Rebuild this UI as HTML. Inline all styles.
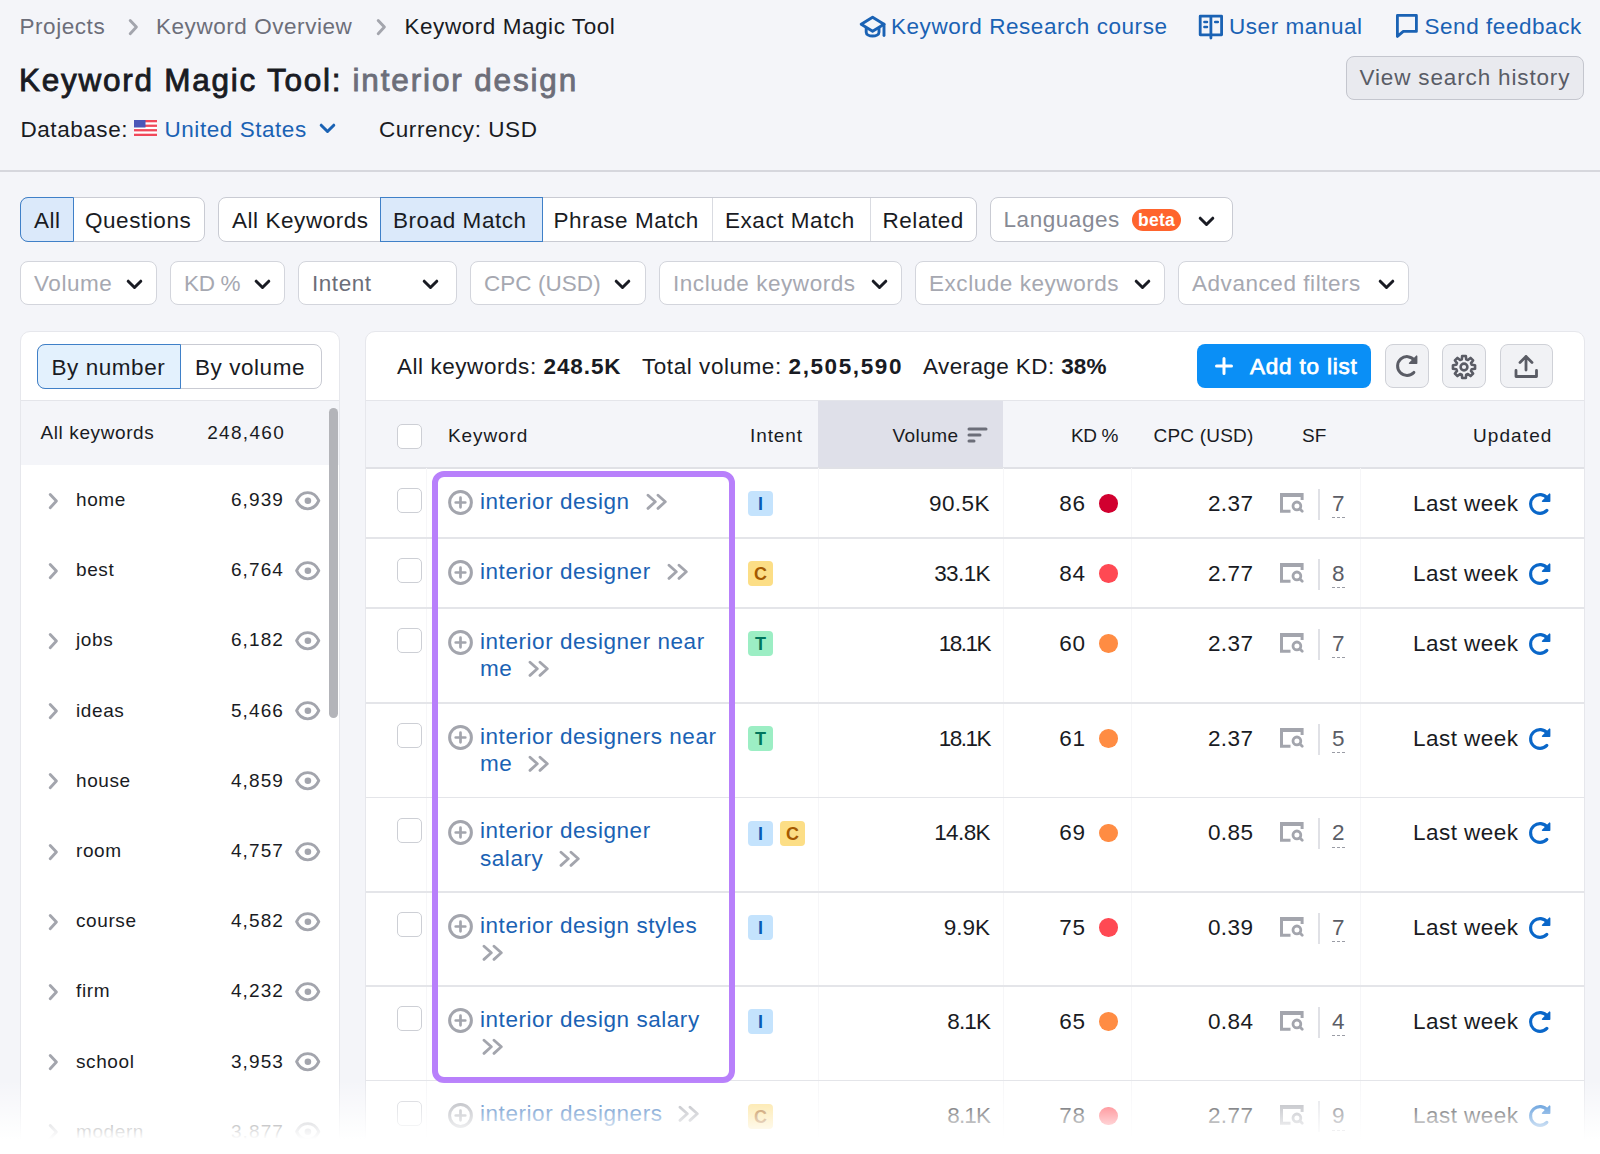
<!DOCTYPE html>
<html><head><meta charset="utf-8"><style>
*{box-sizing:border-box;margin:0;padding:0}
html,body{width:1600px;height:1154px;overflow:hidden;background:#f4f5f9;font-family:"Liberation Sans",sans-serif;color:#191b23}
.a{position:absolute;white-space:nowrap}
.t22{font-size:22.5px;letter-spacing:.55px;line-height:26px}
.t19{font-size:19px;letter-spacing:.6px;line-height:24px}
.gray{color:#6c6e79}
.blue{color:#1a62b4}
.ph{color:#a6a8b1}
.kw{font-size:22.5px;letter-spacing:.55px;line-height:26px;color:#1a62b4}
.num{font-size:22.5px;letter-spacing:.45px;line-height:26px}
.chev{position:absolute}
</style></head><body>
<div class="a t22 gray" style="left:19.5px;top:14px">Projects</div>
<svg class="a" style="left:127px;top:17.5px" width="12" height="18" viewBox="0 0 12 18"><path d="M3.2 2.5l6.2 6.6-6.2 6.6" fill="none" stroke="#a3a5ad" stroke-width="2.9" stroke-linecap="round" stroke-linejoin="round"/></svg>
<div class="a t22 gray" style="left:156px;top:14px">Keyword Overview</div>
<svg class="a" style="left:375px;top:17.5px" width="12" height="18" viewBox="0 0 12 18"><path d="M3.2 2.5l6.2 6.6-6.2 6.6" fill="none" stroke="#a3a5ad" stroke-width="2.9" stroke-linecap="round" stroke-linejoin="round"/></svg>
<div class="a t22" style="left:404.5px;top:14px">Keyword Magic Tool</div>
<div class="a" style="left:19px;top:60.5px;font-size:31.5px;font-weight:normal;-webkit-text-stroke:.85px #191b23;letter-spacing:1.75px;line-height:38px">Keyword Magic Tool:</div>
<div class="a" style="left:352.5px;top:60.5px;font-size:31.5px;font-weight:normal;-webkit-text-stroke:.85px #6c6e79;letter-spacing:1.85px;line-height:38px;color:#6c6e79">interior design</div>
<div class="a t22" style="left:20.5px;top:117px">Database:</div>
<svg class="a" style="left:134px;top:120px" width="23" height="16" viewBox="0 0 23 16">
<rect width="23" height="16" fill="#fff"/>
<rect y="0" width="23" height="2.3" fill="#f0485a"/><rect y="4.6" width="23" height="2.3" fill="#f0485a"/>
<rect y="9.1" width="23" height="2.3" fill="#f0485a"/><rect y="13.7" width="23" height="2.3" fill="#f0485a"/>
<rect width="11.5" height="7.5" fill="#4a56b8"/></svg>
<div class="a t22 blue" style="left:164.5px;top:117px">United States</div>
<svg class="a" style="left:319px;top:123px" width="17" height="11" viewBox="0 0 17 11"><path d="M2.2 2.2l6.3 6.3 6.3-6.3" fill="none" stroke="#1a62b4" stroke-width="3" stroke-linecap="round" stroke-linejoin="round"/></svg>
<div class="a t22" style="left:379px;top:117px">Currency: USD</div>
<div class="a" style="left:0;top:170px;width:1600px;height:2px;background:#d6d7dd"></div>
<svg class="a" style="left:859px;top:14px" width="28" height="26" viewBox="0 0 28 26">
 <path d="M13.6 3.3L2.2 10.2l11.4 7 11.4-7z" fill="none" stroke="#1a62b4" stroke-width="2.9" stroke-linejoin="round"/>
 <path d="M7.2 13.8v4.4c0 2.3 3 3.8 6.4 3.8s6.4-1.5 6.4-3.8v-4.4" fill="none" stroke="#1a62b4" stroke-width="2.9"/>
 <path d="M25 10.2v11.3" stroke="#1a62b4" stroke-width="2.9" stroke-linecap="round"/>
</svg>
<div class="a t22 blue" style="left:891px;top:14px">Keyword Research course</div>
<svg class="a" style="left:1198px;top:13px" width="26" height="27" viewBox="0 0 26 27">
 <path d="M2.2 3.2h21.4v18.6H2.2z" fill="none" stroke="#1a62b4" stroke-width="2.8" stroke-linejoin="round"/>
 <path d="M12.9 3.5v21.5" stroke="#1a62b4" stroke-width="2.8" stroke-linecap="round"/>
 <path d="M6.4 9h2.6M6.4 13.9h2.6M17.2 9h2.6" stroke="#1a62b4" stroke-width="2.5" stroke-linecap="round"/>
</svg>
<div class="a t22 blue" style="left:1229px;top:14px">User manual</div>
<svg class="a" style="left:1394px;top:14px" width="26" height="26" viewBox="0 0 26 26">
 <path d="M3.4 1.4H22.4V17.4H9.3L3.4 22.4Z" fill="none" stroke="#1a62b4" stroke-width="2.8" stroke-linejoin="round"/>
</svg>
<div class="a t22 blue" style="left:1424.5px;top:14px">Send feedback</div>
<div class="a" style="left:1346px;top:56px;width:238px;height:44px;border:1.5px solid #c4c6ce;border-radius:8px;background:#e9eaef"></div>
<div class="a t22" style="left:1359.5px;top:64.5px;color:#595c66;letter-spacing:.85px">View search history</div>
<div class="a" style="left:20px;top:197px;width:185px;height:45px;border:1.5px solid #c9cbd3;border-radius:8px;background:#fff"></div>
<div class="a" style="left:20px;top:197px;width:54px;height:45px;border:1.5px solid #3f80c8;border-radius:8px 0 0 8px;background:#dbe9fa"></div>
<div class="a t22" style="left:34px;top:207.5px">All</div>
<div class="a t22" style="left:85px;top:207.5px">Questions</div>
<div class="a" style="left:218px;top:197px;width:759px;height:45px;border:1.5px solid #c9cbd3;border-radius:8px;background:#fff"></div>
<div class="a" style="left:380px;top:197px;width:163px;height:45px;border:1.5px solid #3f80c8;border-radius:0;background:#dbe9fa"></div>
<div class="a" style="left:712px;top:198px;width:1px;height:43px;background:#d9dbe1"></div>
<div class="a" style="left:870px;top:198px;width:1px;height:43px;background:#d9dbe1"></div>
<div class="a t22" style="left:232px;top:207.5px">All Keywords</div>
<div class="a t22" style="left:393px;top:207.5px">Broad Match</div>
<div class="a t22" style="left:553.5px;top:207.5px">Phrase Match</div>
<div class="a t22" style="left:725px;top:207.5px">Exact Match</div>
<div class="a t22" style="left:882.5px;top:207.5px">Related</div>
<div class="a" style="left:990px;top:197px;width:243px;height:45px;border:1.5px solid #c9cbd3;border-radius:8px;background:#fff"></div>
<div class="a t22" style="left:1003.5px;top:206.5px;color:#878a94">Languages</div>
<div class="a" style="left:1132px;top:209px;width:49px;height:22px;border-radius:11px;background:#ff642d;color:#fff;font-size:17.5px;font-weight:bold;line-height:22px;text-align:center;letter-spacing:.3px">beta</div>
<svg class="a" style="left:1198px;top:215.5px" width="17" height="11" viewBox="0 0 17 11"><path d="M2.2 2.2l6.3 6.3 6.3-6.3" fill="none" stroke="#191b23" stroke-width="3" stroke-linecap="round" stroke-linejoin="round"/></svg>
<div class="a" style="left:20px;top:261px;width:137px;height:44px;border:1.5px solid #d3d5dc;border-radius:8px;background:#fff"></div>
<div class="a t22" style="left:34px;top:270.5px;color:#a6a8b1;letter-spacing:.55px">Volume</div>
<svg class="a" style="left:126px;top:279px" width="17" height="11" viewBox="0 0 17 11"><path d="M2.2 2.2l6.3 6.3 6.3-6.3" fill="none" stroke="#191b23" stroke-width="3" stroke-linecap="round" stroke-linejoin="round"/></svg>
<div class="a" style="left:170px;top:261px;width:115px;height:44px;border:1.5px solid #d3d5dc;border-radius:8px;background:#fff"></div>
<div class="a t22" style="left:184px;top:270.5px;color:#a6a8b1;letter-spacing:-.3px">KD %</div>
<svg class="a" style="left:254px;top:279px" width="17" height="11" viewBox="0 0 17 11"><path d="M2.2 2.2l6.3 6.3 6.3-6.3" fill="none" stroke="#191b23" stroke-width="3" stroke-linecap="round" stroke-linejoin="round"/></svg>
<div class="a" style="left:298px;top:261px;width:159px;height:44px;border:1.5px solid #d3d5dc;border-radius:8px;background:#fff"></div>
<div class="a t22" style="left:312px;top:270.5px;color:#6c6e79;letter-spacing:.55px">Intent</div>
<svg class="a" style="left:422px;top:279px" width="17" height="11" viewBox="0 0 17 11"><path d="M2.2 2.2l6.3 6.3 6.3-6.3" fill="none" stroke="#191b23" stroke-width="3" stroke-linecap="round" stroke-linejoin="round"/></svg>
<div class="a" style="left:470px;top:261px;width:176px;height:44px;border:1.5px solid #d3d5dc;border-radius:8px;background:#fff"></div>
<div class="a t22" style="left:484px;top:270.5px;color:#a6a8b1;letter-spacing:.05px">CPC (USD)</div>
<svg class="a" style="left:614px;top:279px" width="17" height="11" viewBox="0 0 17 11"><path d="M2.2 2.2l6.3 6.3 6.3-6.3" fill="none" stroke="#191b23" stroke-width="3" stroke-linecap="round" stroke-linejoin="round"/></svg>
<div class="a" style="left:659px;top:261px;width:243px;height:44px;border:1.5px solid #d3d5dc;border-radius:8px;background:#fff"></div>
<div class="a t22" style="left:673px;top:270.5px;color:#a6a8b1;letter-spacing:.55px">Include keywords</div>
<svg class="a" style="left:871px;top:279px" width="17" height="11" viewBox="0 0 17 11"><path d="M2.2 2.2l6.3 6.3 6.3-6.3" fill="none" stroke="#191b23" stroke-width="3" stroke-linecap="round" stroke-linejoin="round"/></svg>
<div class="a" style="left:915px;top:261px;width:250px;height:44px;border:1.5px solid #d3d5dc;border-radius:8px;background:#fff"></div>
<div class="a t22" style="left:929px;top:270.5px;color:#a6a8b1;letter-spacing:.55px">Exclude keywords</div>
<svg class="a" style="left:1134px;top:279px" width="17" height="11" viewBox="0 0 17 11"><path d="M2.2 2.2l6.3 6.3 6.3-6.3" fill="none" stroke="#191b23" stroke-width="3" stroke-linecap="round" stroke-linejoin="round"/></svg>
<div class="a" style="left:1178px;top:261px;width:231px;height:44px;border:1.5px solid #d3d5dc;border-radius:8px;background:#fff"></div>
<div class="a t22" style="left:1192px;top:270.5px;color:#a6a8b1;letter-spacing:.55px">Advanced filters</div>
<svg class="a" style="left:1378px;top:279px" width="17" height="11" viewBox="0 0 17 11"><path d="M2.2 2.2l6.3 6.3 6.3-6.3" fill="none" stroke="#191b23" stroke-width="3" stroke-linecap="round" stroke-linejoin="round"/></svg>
<div class="a" style="left:20px;top:331px;width:320px;height:900px;background:#fff;border:1px solid #e6e7ec;border-radius:10px"></div>
<div class="a" style="left:21px;top:400px;width:318px;height:1px;background:#e4e5ea"></div>
<div class="a" style="left:21px;top:401px;width:318px;height:64px;background:#f4f5f9"></div>
<div class="a" style="left:37px;top:344px;width:285px;height:45px;border:1.5px solid #c9cbd3;border-radius:8px;background:#fff"></div>
<div class="a" style="left:37px;top:344px;width:144px;height:45px;border:1.5px solid #3f80c8;border-radius:8px 0 0 8px;background:#e3f1fd"></div>
<div class="a t22" style="left:51.5px;top:355px">By number</div>
<div class="a t22" style="left:195px;top:355px">By volume</div>
<div class="a t19" style="left:40.5px;top:421px">All keywords</div>
<div class="a t19" style="left:183px;width:102px;text-align:right;top:421px;letter-spacing:1.3px">248,460</div>
<div class="a" style="left:329px;top:408px;width:9px;height:310px;border-radius:5px;background:#b3b4b9"></div>
<svg class="a" style="left:47px;top:491.5px" width="12" height="18" viewBox="0 0 12 18"><path d="M3.2 2.5l6.2 6.6-6.2 6.6" fill="none" stroke="#a3a5ad" stroke-width="2.9" stroke-linecap="round" stroke-linejoin="round"/></svg>
<div class="a t19" style="left:76px;top:488.0px">home</div>
<div class="a t19" style="left:183px;width:101px;text-align:right;top:488.0px;letter-spacing:1.1px">6,939</div>
<svg class="a" style="left:294.5px;top:490.6px" width="26" height="20" viewBox="0 0 26 20"><path d="M1.6 9.7C4 4.2 8 1.6 12.7 1.6S21.4 4.2 23.8 9.7C21.4 15.2 17.4 17.9 12.7 17.9S4 15.2 1.6 9.7z" fill="none" stroke="#a3a5ad" stroke-width="2.9" stroke-linejoin="round"/><circle cx="12.9" cy="9.8" r="3.3" fill="#a3a5ad"/></svg>
<svg class="a" style="left:47px;top:561.7px" width="12" height="18" viewBox="0 0 12 18"><path d="M3.2 2.5l6.2 6.6-6.2 6.6" fill="none" stroke="#a3a5ad" stroke-width="2.9" stroke-linecap="round" stroke-linejoin="round"/></svg>
<div class="a t19" style="left:76px;top:558.2px">best</div>
<div class="a t19" style="left:183px;width:101px;text-align:right;top:558.2px;letter-spacing:1.1px">6,764</div>
<svg class="a" style="left:294.5px;top:560.8px" width="26" height="20" viewBox="0 0 26 20"><path d="M1.6 9.7C4 4.2 8 1.6 12.7 1.6S21.4 4.2 23.8 9.7C21.4 15.2 17.4 17.9 12.7 17.9S4 15.2 1.6 9.7z" fill="none" stroke="#a3a5ad" stroke-width="2.9" stroke-linejoin="round"/><circle cx="12.9" cy="9.8" r="3.3" fill="#a3a5ad"/></svg>
<svg class="a" style="left:47px;top:631.9px" width="12" height="18" viewBox="0 0 12 18"><path d="M3.2 2.5l6.2 6.6-6.2 6.6" fill="none" stroke="#a3a5ad" stroke-width="2.9" stroke-linecap="round" stroke-linejoin="round"/></svg>
<div class="a t19" style="left:76px;top:628.4px">jobs</div>
<div class="a t19" style="left:183px;width:101px;text-align:right;top:628.4px;letter-spacing:1.1px">6,182</div>
<svg class="a" style="left:294.5px;top:631.0px" width="26" height="20" viewBox="0 0 26 20"><path d="M1.6 9.7C4 4.2 8 1.6 12.7 1.6S21.4 4.2 23.8 9.7C21.4 15.2 17.4 17.9 12.7 17.9S4 15.2 1.6 9.7z" fill="none" stroke="#a3a5ad" stroke-width="2.9" stroke-linejoin="round"/><circle cx="12.9" cy="9.8" r="3.3" fill="#a3a5ad"/></svg>
<svg class="a" style="left:47px;top:702.1px" width="12" height="18" viewBox="0 0 12 18"><path d="M3.2 2.5l6.2 6.6-6.2 6.6" fill="none" stroke="#a3a5ad" stroke-width="2.9" stroke-linecap="round" stroke-linejoin="round"/></svg>
<div class="a t19" style="left:76px;top:698.6px">ideas</div>
<div class="a t19" style="left:183px;width:101px;text-align:right;top:698.6px;letter-spacing:1.1px">5,466</div>
<svg class="a" style="left:294.5px;top:701.2px" width="26" height="20" viewBox="0 0 26 20"><path d="M1.6 9.7C4 4.2 8 1.6 12.7 1.6S21.4 4.2 23.8 9.7C21.4 15.2 17.4 17.9 12.7 17.9S4 15.2 1.6 9.7z" fill="none" stroke="#a3a5ad" stroke-width="2.9" stroke-linejoin="round"/><circle cx="12.9" cy="9.8" r="3.3" fill="#a3a5ad"/></svg>
<svg class="a" style="left:47px;top:772.3px" width="12" height="18" viewBox="0 0 12 18"><path d="M3.2 2.5l6.2 6.6-6.2 6.6" fill="none" stroke="#a3a5ad" stroke-width="2.9" stroke-linecap="round" stroke-linejoin="round"/></svg>
<div class="a t19" style="left:76px;top:768.8px">house</div>
<div class="a t19" style="left:183px;width:101px;text-align:right;top:768.8px;letter-spacing:1.1px">4,859</div>
<svg class="a" style="left:294.5px;top:771.4px" width="26" height="20" viewBox="0 0 26 20"><path d="M1.6 9.7C4 4.2 8 1.6 12.7 1.6S21.4 4.2 23.8 9.7C21.4 15.2 17.4 17.9 12.7 17.9S4 15.2 1.6 9.7z" fill="none" stroke="#a3a5ad" stroke-width="2.9" stroke-linejoin="round"/><circle cx="12.9" cy="9.8" r="3.3" fill="#a3a5ad"/></svg>
<svg class="a" style="left:47px;top:842.5px" width="12" height="18" viewBox="0 0 12 18"><path d="M3.2 2.5l6.2 6.6-6.2 6.6" fill="none" stroke="#a3a5ad" stroke-width="2.9" stroke-linecap="round" stroke-linejoin="round"/></svg>
<div class="a t19" style="left:76px;top:839.0px">room</div>
<div class="a t19" style="left:183px;width:101px;text-align:right;top:839.0px;letter-spacing:1.1px">4,757</div>
<svg class="a" style="left:294.5px;top:841.6px" width="26" height="20" viewBox="0 0 26 20"><path d="M1.6 9.7C4 4.2 8 1.6 12.7 1.6S21.4 4.2 23.8 9.7C21.4 15.2 17.4 17.9 12.7 17.9S4 15.2 1.6 9.7z" fill="none" stroke="#a3a5ad" stroke-width="2.9" stroke-linejoin="round"/><circle cx="12.9" cy="9.8" r="3.3" fill="#a3a5ad"/></svg>
<svg class="a" style="left:47px;top:912.7px" width="12" height="18" viewBox="0 0 12 18"><path d="M3.2 2.5l6.2 6.6-6.2 6.6" fill="none" stroke="#a3a5ad" stroke-width="2.9" stroke-linecap="round" stroke-linejoin="round"/></svg>
<div class="a t19" style="left:76px;top:909.2px">course</div>
<div class="a t19" style="left:183px;width:101px;text-align:right;top:909.2px;letter-spacing:1.1px">4,582</div>
<svg class="a" style="left:294.5px;top:911.8px" width="26" height="20" viewBox="0 0 26 20"><path d="M1.6 9.7C4 4.2 8 1.6 12.7 1.6S21.4 4.2 23.8 9.7C21.4 15.2 17.4 17.9 12.7 17.9S4 15.2 1.6 9.7z" fill="none" stroke="#a3a5ad" stroke-width="2.9" stroke-linejoin="round"/><circle cx="12.9" cy="9.8" r="3.3" fill="#a3a5ad"/></svg>
<svg class="a" style="left:47px;top:982.9px" width="12" height="18" viewBox="0 0 12 18"><path d="M3.2 2.5l6.2 6.6-6.2 6.6" fill="none" stroke="#a3a5ad" stroke-width="2.9" stroke-linecap="round" stroke-linejoin="round"/></svg>
<div class="a t19" style="left:76px;top:979.4px">firm</div>
<div class="a t19" style="left:183px;width:101px;text-align:right;top:979.4px;letter-spacing:1.1px">4,232</div>
<svg class="a" style="left:294.5px;top:982.0px" width="26" height="20" viewBox="0 0 26 20"><path d="M1.6 9.7C4 4.2 8 1.6 12.7 1.6S21.4 4.2 23.8 9.7C21.4 15.2 17.4 17.9 12.7 17.9S4 15.2 1.6 9.7z" fill="none" stroke="#a3a5ad" stroke-width="2.9" stroke-linejoin="round"/><circle cx="12.9" cy="9.8" r="3.3" fill="#a3a5ad"/></svg>
<svg class="a" style="left:47px;top:1053.1px" width="12" height="18" viewBox="0 0 12 18"><path d="M3.2 2.5l6.2 6.6-6.2 6.6" fill="none" stroke="#a3a5ad" stroke-width="2.9" stroke-linecap="round" stroke-linejoin="round"/></svg>
<div class="a t19" style="left:76px;top:1049.6px">school</div>
<div class="a t19" style="left:183px;width:101px;text-align:right;top:1049.6px;letter-spacing:1.1px">3,953</div>
<svg class="a" style="left:294.5px;top:1052.2px" width="26" height="20" viewBox="0 0 26 20"><path d="M1.6 9.7C4 4.2 8 1.6 12.7 1.6S21.4 4.2 23.8 9.7C21.4 15.2 17.4 17.9 12.7 17.9S4 15.2 1.6 9.7z" fill="none" stroke="#a3a5ad" stroke-width="2.9" stroke-linejoin="round"/><circle cx="12.9" cy="9.8" r="3.3" fill="#a3a5ad"/></svg>
<svg class="a" style="left:47px;top:1123.3px" width="12" height="18" viewBox="0 0 12 18"><path d="M3.2 2.5l6.2 6.6-6.2 6.6" fill="none" stroke="#a3a5ad" stroke-width="2.9" stroke-linecap="round" stroke-linejoin="round"/></svg>
<div class="a t19" style="left:76px;top:1119.8px">modern</div>
<div class="a t19" style="left:183px;width:101px;text-align:right;top:1119.8px;letter-spacing:1.1px">3,877</div>
<svg class="a" style="left:294.5px;top:1122.4px" width="26" height="20" viewBox="0 0 26 20"><path d="M1.6 9.7C4 4.2 8 1.6 12.7 1.6S21.4 4.2 23.8 9.7C21.4 15.2 17.4 17.9 12.7 17.9S4 15.2 1.6 9.7z" fill="none" stroke="#a3a5ad" stroke-width="2.9" stroke-linejoin="round"/><circle cx="12.9" cy="9.8" r="3.3" fill="#a3a5ad"/></svg>
<div class="a" style="left:365px;top:331px;width:1220px;height:900px;background:#fff;border:1px solid #e6e7ec;border-radius:10px"></div>
<div class="a t22" style="left:397px;top:354px">All keywords: <b style="letter-spacing:.9px">248.5K</b></div>
<div class="a t22" style="left:642px;top:354px">Total volume: <b style="letter-spacing:1.6px">2,505,590</b></div>
<div class="a t22" style="left:923px;top:354px;letter-spacing:.4px">Average KD: <b style="letter-spacing:.1px">38%</b></div>
<div class="a" style="left:1197px;top:344px;width:174px;height:44px;border-radius:8px;background:#0a8ff6"></div>
<svg class="a" style="left:1214px;top:356px" width="20" height="20" viewBox="0 0 20 20"><path d="M10 2.5v15M2.5 10h15" stroke="#fff" stroke-width="3" stroke-linecap="round"/></svg>
<div class="a" style="left:1250px;top:354px;font-size:22.5px;font-weight:normal;-webkit-text-stroke:.75px #fff;color:#fff;line-height:26px;letter-spacing:.8px">Add to list</div>
<div class="a" style="left:1385px;top:344px;width:44px;height:44px;border:1.5px solid #cfd1d7;border-radius:8px;background:#f1f2f5"></div>
<div class="a" style="left:1442px;top:344px;width:44px;height:44px;border:1.5px solid #cfd1d7;border-radius:8px;background:#f1f2f5"></div>
<div class="a" style="left:1500px;top:344px;width:53px;height:44px;border:1.5px solid #cfd1d7;border-radius:8px;background:#f1f2f5"></div>
<svg class="a" style="left:1394px;top:353px" width="26" height="26" viewBox="0 0 26 26"><path d="M20.41 7.21A9.4 9.4 0 1 0 19.87 19.41" fill="none" stroke="#5a5c65" stroke-width="3.0" stroke-linecap="round"/><path d="M22.6 3.2V10.2H15.6z" fill="#5a5c65" stroke="#5a5c65" stroke-width="1.6" stroke-linejoin="round"/></svg>
<svg class="a" style="left:1451px;top:353.5px" width="26" height="26" viewBox="0 0 26 26"><path d="M20.70 10.82 L24.05 11.18 L24.05 14.82 L20.70 15.18 L19.99 16.90 L22.10 19.53 L19.53 22.10 L16.90 19.99 L15.18 20.70 L14.82 24.05 L11.18 24.05 L10.82 20.70 L9.10 19.99 L6.47 22.10 L3.90 19.53 L6.01 16.90 L5.30 15.18 L1.95 14.82 L1.95 11.18 L5.30 10.82 L6.01 9.10 L3.90 6.47 L6.47 3.90 L9.10 6.01 L10.82 5.30 L11.18 1.95 L14.82 1.95 L15.18 5.30 L16.90 6.01 L19.53 3.90 L22.10 6.47 L19.99 9.10z" fill="none" stroke="#5a5c65" stroke-width="2.6" stroke-linejoin="round"/><circle cx="13" cy="13" r="3.4" fill="none" stroke="#5a5c65" stroke-width="2.6"/></svg>
<svg class="a" style="left:1513px;top:353px" width="26" height="26" viewBox="0 0 26 26"><path d="M13 17V3.5M7 9.5l6-6 6 6" fill="none" stroke="#5a5c65" stroke-width="2.8" stroke-linecap="round" stroke-linejoin="round"/><path d="M3 17.5v6h20.5v-6" fill="none" stroke="#5a5c65" stroke-width="2.8" stroke-linecap="round" stroke-linejoin="round"/></svg>
<div class="a" style="left:366px;top:400px;width:1218px;height:1px;background:#e4e5ea"></div>
<div class="a" style="left:366px;top:401px;width:1218px;height:67px;background:#f4f5f9"></div>
<div class="a" style="left:818px;top:401px;width:185px;height:67px;background:#dfe0e9"></div>
<div class="a" style="left:366px;top:466.5px;width:1218px;height:2px;background:#e0e1e6"></div>
<div class="a" style="left:397px;top:424px;width:25px;height:25px;border:1.5px solid #cdcfd5;border-radius:5px;background:#fff"></div>
<div class="a t19" style="left:448px;top:424px;letter-spacing:0.9px">Keyword</div>
<div class="a t19" style="left:750px;top:424px;letter-spacing:0.9px">Intent</div>
<div class="a t19" style="left:758.5px;width:200px;text-align:right;top:424px;letter-spacing:0.45px;margin-right:-0.45px">Volume</div>
<div class="a t19" style="left:918px;width:200px;text-align:right;top:424px;letter-spacing:-0.4px;margin-right:--0.4px">KD %</div>
<div class="a t19" style="left:1053.5px;width:200px;text-align:right;top:424px;letter-spacing:0.2px;margin-right:-0.2px">CPC (USD)</div>
<div class="a t19" style="left:1302px;top:424px;letter-spacing:0px">SF</div>
<div class="a t19" style="left:1352.5px;width:200px;text-align:right;top:424px;letter-spacing:1.1px;margin-right:-1.1px">Updated</div>
<svg class="a" style="left:967px;top:426px" width="21" height="18" viewBox="0 0 21 18"><path d="M2 3h17M2 9h11M2 15h5" stroke="#6c6e79" stroke-width="3" stroke-linecap="round"/></svg>
<div class="a" style="left:426px;top:468px;width:1px;height:700px;background:#f6f6f8"></div>
<div class="a" style="left:818px;top:468px;width:1px;height:700px;background:#f6f6f8"></div>
<div class="a" style="left:1003px;top:468px;width:1px;height:700px;background:#f6f6f8"></div>
<div class="a" style="left:1131px;top:468px;width:1px;height:700px;background:#f6f6f8"></div>
<div class="a" style="left:1360px;top:468px;width:1px;height:700px;background:#f6f6f8"></div>
<div class="a" style="left:366px;top:537.0px;width:1218px;height:1.5px;background:#e4e5e9"></div>
<div class="a" style="left:397px;top:488.0px;width:25px;height:25px;border:1.5px solid #cdcfd5;border-radius:5px;background:#fff"></div>
<svg class="a" style="left:447px;top:489.0px" width="27" height="27" viewBox="0 0 27 27"><circle cx="13.5" cy="13.5" r="10.9" fill="none" stroke="#a3a5ad" stroke-width="3"/><path d="M13.5 8.7v9.6M8.7 13.5h9.6" stroke="#a3a5ad" stroke-width="2.7" stroke-linecap="round"/></svg>
<div class="a kw" style="left:480px;top:488.5px">interior design<svg width="22" height="18" viewBox="0 0 22 18" style="vertical-align:-2px;margin-left:15px"><path d="M3 2.2l7.3 6.6L3 15.4M13 2.2l7.3 6.6L13 15.4" fill="none" stroke="#a3a5ad" stroke-width="2.8" stroke-linecap="round" stroke-linejoin="round"/></svg></div>
<div class="a" style="left:748px;top:491.0px;width:25px;height:25px;border-radius:4px;background:#c4e3fd;color:#0a5ab4;font-size:18px;font-weight:bold;line-height:27px;text-align:center">I</div>
<div class="a num" style="left:790px;width:200px;text-align:right;top:490.5px;letter-spacing:0.45px">90.5K</div>
<div class="a num" style="left:886px;width:200px;text-align:right;top:490.5px;letter-spacing:.9px">86</div>
<div class="a" style="left:1099.3px;top:494.1px;width:18.6px;height:18.6px;border-radius:50%;background:#d1002f"></div>
<div class="a num" style="left:1053.5px;width:200px;text-align:right;top:490.5px">2.37</div>
<svg class="a" style="left:1280px;top:492.5px" width="24" height="20" viewBox="0 0 24 20"><path d="M0 0h23.6v7H20.6V4H3v12.7h7.5v3H0z" fill="#a3a5ad"/><circle cx="16.9" cy="12.9" r="3.9" fill="none" stroke="#a3a5ad" stroke-width="2.8"/><path d="M19.8 15.8l2.4 2.4" stroke="#a3a5ad" stroke-width="2.8" stroke-linecap="round"/></svg>
<div class="a" style="left:1318px;top:488.5px;width:2px;height:31px;background:#e0e1e6"></div>
<div class="a num" style="left:1332px;top:490.5px;color:#5b5d66">7</div>
<div class="a" style="left:1332px;top:517.0px;width:13px;height:0;border-top:1.5px dashed #9a9ca5"></div>
<div class="a num" style="left:1413px;top:490.5px">Last week</div>
<svg class="a" style="left:1527px;top:490.5px" width="26" height="26" viewBox="0 0 26 26"><path d="M20.41 7.21A9.4 9.4 0 1 0 19.87 19.41" fill="none" stroke="#0a67c9" stroke-width="3.1" stroke-linecap="round"/><path d="M22.6 3.2V10.2H15.6z" fill="#0a67c9" stroke="#0a67c9" stroke-width="1.6" stroke-linejoin="round"/></svg>
<div class="a" style="left:366px;top:607.0px;width:1218px;height:1.5px;background:#e4e5e9"></div>
<div class="a" style="left:397px;top:558.0px;width:25px;height:25px;border:1.5px solid #cdcfd5;border-radius:5px;background:#fff"></div>
<svg class="a" style="left:447px;top:559.0px" width="27" height="27" viewBox="0 0 27 27"><circle cx="13.5" cy="13.5" r="10.9" fill="none" stroke="#a3a5ad" stroke-width="3"/><path d="M13.5 8.7v9.6M8.7 13.5h9.6" stroke="#a3a5ad" stroke-width="2.7" stroke-linecap="round"/></svg>
<div class="a kw" style="left:480px;top:558.5px">interior designer<svg width="22" height="18" viewBox="0 0 22 18" style="vertical-align:-2px;margin-left:15px"><path d="M3 2.2l7.3 6.6L3 15.4M13 2.2l7.3 6.6L13 15.4" fill="none" stroke="#a3a5ad" stroke-width="2.8" stroke-linecap="round" stroke-linejoin="round"/></svg></div>
<div class="a" style="left:748px;top:561.0px;width:25px;height:25px;border-radius:4px;background:#fcde86;color:#a55900;font-size:18px;font-weight:bold;line-height:27px;text-align:center">C</div>
<div class="a num" style="left:790px;width:200px;text-align:right;top:560.5px;letter-spacing:-0.6px">33.1K</div>
<div class="a num" style="left:886px;width:200px;text-align:right;top:560.5px;letter-spacing:.9px">84</div>
<div class="a" style="left:1099.3px;top:564.1px;width:18.6px;height:18.6px;border-radius:50%;background:#ff4953"></div>
<div class="a num" style="left:1053.5px;width:200px;text-align:right;top:560.5px">2.77</div>
<svg class="a" style="left:1280px;top:562.5px" width="24" height="20" viewBox="0 0 24 20"><path d="M0 0h23.6v7H20.6V4H3v12.7h7.5v3H0z" fill="#a3a5ad"/><circle cx="16.9" cy="12.9" r="3.9" fill="none" stroke="#a3a5ad" stroke-width="2.8"/><path d="M19.8 15.8l2.4 2.4" stroke="#a3a5ad" stroke-width="2.8" stroke-linecap="round"/></svg>
<div class="a" style="left:1318px;top:558.5px;width:2px;height:31px;background:#e0e1e6"></div>
<div class="a num" style="left:1332px;top:560.5px;color:#5b5d66">8</div>
<div class="a" style="left:1332px;top:587.0px;width:13px;height:0;border-top:1.5px dashed #9a9ca5"></div>
<div class="a num" style="left:1413px;top:560.5px">Last week</div>
<svg class="a" style="left:1527px;top:560.5px" width="26" height="26" viewBox="0 0 26 26"><path d="M20.41 7.21A9.4 9.4 0 1 0 19.87 19.41" fill="none" stroke="#0a67c9" stroke-width="3.1" stroke-linecap="round"/><path d="M22.6 3.2V10.2H15.6z" fill="#0a67c9" stroke="#0a67c9" stroke-width="1.6" stroke-linejoin="round"/></svg>
<div class="a" style="left:366px;top:702.0px;width:1218px;height:1.5px;background:#e4e5e9"></div>
<div class="a" style="left:397px;top:628.0px;width:25px;height:25px;border:1.5px solid #cdcfd5;border-radius:5px;background:#fff"></div>
<svg class="a" style="left:447px;top:629.0px" width="27" height="27" viewBox="0 0 27 27"><circle cx="13.5" cy="13.5" r="10.9" fill="none" stroke="#a3a5ad" stroke-width="3"/><path d="M13.5 8.7v9.6M8.7 13.5h9.6" stroke="#a3a5ad" stroke-width="2.7" stroke-linecap="round"/></svg>
<div class="a kw" style="left:480px;top:628.5px">interior designer near</div>
<div class="a kw" style="left:480px;top:656.1px">me<svg width="22" height="18" viewBox="0 0 22 18" style="vertical-align:-2px;margin-left:15px"><path d="M3 2.2l7.3 6.6L3 15.4M13 2.2l7.3 6.6L13 15.4" fill="none" stroke="#a3a5ad" stroke-width="2.8" stroke-linecap="round" stroke-linejoin="round"/></svg></div>
<div class="a" style="left:748px;top:631.0px;width:25px;height:25px;border-radius:4px;background:#9ceec4;color:#00755c;font-size:18px;font-weight:bold;line-height:27px;text-align:center">T</div>
<div class="a num" style="left:790px;width:200px;text-align:right;top:630.5px;letter-spacing:-1.5px">18.1K</div>
<div class="a num" style="left:886px;width:200px;text-align:right;top:630.5px;letter-spacing:.9px">60</div>
<div class="a" style="left:1099.3px;top:634.1px;width:18.6px;height:18.6px;border-radius:50%;background:#ff8c43"></div>
<div class="a num" style="left:1053.5px;width:200px;text-align:right;top:630.5px">2.37</div>
<svg class="a" style="left:1280px;top:632.5px" width="24" height="20" viewBox="0 0 24 20"><path d="M0 0h23.6v7H20.6V4H3v12.7h7.5v3H0z" fill="#a3a5ad"/><circle cx="16.9" cy="12.9" r="3.9" fill="none" stroke="#a3a5ad" stroke-width="2.8"/><path d="M19.8 15.8l2.4 2.4" stroke="#a3a5ad" stroke-width="2.8" stroke-linecap="round"/></svg>
<div class="a" style="left:1318px;top:628.5px;width:2px;height:31px;background:#e0e1e6"></div>
<div class="a num" style="left:1332px;top:630.5px;color:#5b5d66">7</div>
<div class="a" style="left:1332px;top:657.0px;width:13px;height:0;border-top:1.5px dashed #9a9ca5"></div>
<div class="a num" style="left:1413px;top:630.5px">Last week</div>
<svg class="a" style="left:1527px;top:630.5px" width="26" height="26" viewBox="0 0 26 26"><path d="M20.41 7.21A9.4 9.4 0 1 0 19.87 19.41" fill="none" stroke="#0a67c9" stroke-width="3.1" stroke-linecap="round"/><path d="M22.6 3.2V10.2H15.6z" fill="#0a67c9" stroke="#0a67c9" stroke-width="1.6" stroke-linejoin="round"/></svg>
<div class="a" style="left:366px;top:796.5px;width:1218px;height:1.5px;background:#e4e5e9"></div>
<div class="a" style="left:397px;top:723.0px;width:25px;height:25px;border:1.5px solid #cdcfd5;border-radius:5px;background:#fff"></div>
<svg class="a" style="left:447px;top:724.0px" width="27" height="27" viewBox="0 0 27 27"><circle cx="13.5" cy="13.5" r="10.9" fill="none" stroke="#a3a5ad" stroke-width="3"/><path d="M13.5 8.7v9.6M8.7 13.5h9.6" stroke="#a3a5ad" stroke-width="2.7" stroke-linecap="round"/></svg>
<div class="a kw" style="left:480px;top:723.5px">interior designers near</div>
<div class="a kw" style="left:480px;top:751.1px">me<svg width="22" height="18" viewBox="0 0 22 18" style="vertical-align:-2px;margin-left:15px"><path d="M3 2.2l7.3 6.6L3 15.4M13 2.2l7.3 6.6L13 15.4" fill="none" stroke="#a3a5ad" stroke-width="2.8" stroke-linecap="round" stroke-linejoin="round"/></svg></div>
<div class="a" style="left:748px;top:726.0px;width:25px;height:25px;border-radius:4px;background:#9ceec4;color:#00755c;font-size:18px;font-weight:bold;line-height:27px;text-align:center">T</div>
<div class="a num" style="left:790px;width:200px;text-align:right;top:725.5px;letter-spacing:-1.5px">18.1K</div>
<div class="a num" style="left:886px;width:200px;text-align:right;top:725.5px;letter-spacing:.9px">61</div>
<div class="a" style="left:1099.3px;top:729.1px;width:18.6px;height:18.6px;border-radius:50%;background:#ff8c43"></div>
<div class="a num" style="left:1053.5px;width:200px;text-align:right;top:725.5px">2.37</div>
<svg class="a" style="left:1280px;top:727.5px" width="24" height="20" viewBox="0 0 24 20"><path d="M0 0h23.6v7H20.6V4H3v12.7h7.5v3H0z" fill="#a3a5ad"/><circle cx="16.9" cy="12.9" r="3.9" fill="none" stroke="#a3a5ad" stroke-width="2.8"/><path d="M19.8 15.8l2.4 2.4" stroke="#a3a5ad" stroke-width="2.8" stroke-linecap="round"/></svg>
<div class="a" style="left:1318px;top:723.5px;width:2px;height:31px;background:#e0e1e6"></div>
<div class="a num" style="left:1332px;top:725.5px;color:#5b5d66">5</div>
<div class="a" style="left:1332px;top:752.0px;width:13px;height:0;border-top:1.5px dashed #9a9ca5"></div>
<div class="a num" style="left:1413px;top:725.5px">Last week</div>
<svg class="a" style="left:1527px;top:725.5px" width="26" height="26" viewBox="0 0 26 26"><path d="M20.41 7.21A9.4 9.4 0 1 0 19.87 19.41" fill="none" stroke="#0a67c9" stroke-width="3.1" stroke-linecap="round"/><path d="M22.6 3.2V10.2H15.6z" fill="#0a67c9" stroke="#0a67c9" stroke-width="1.6" stroke-linejoin="round"/></svg>
<div class="a" style="left:366px;top:891.0px;width:1218px;height:1.5px;background:#e4e5e9"></div>
<div class="a" style="left:397px;top:817.5px;width:25px;height:25px;border:1.5px solid #cdcfd5;border-radius:5px;background:#fff"></div>
<svg class="a" style="left:447px;top:818.5px" width="27" height="27" viewBox="0 0 27 27"><circle cx="13.5" cy="13.5" r="10.9" fill="none" stroke="#a3a5ad" stroke-width="3"/><path d="M13.5 8.7v9.6M8.7 13.5h9.6" stroke="#a3a5ad" stroke-width="2.7" stroke-linecap="round"/></svg>
<div class="a kw" style="left:480px;top:818.0px">interior designer</div>
<div class="a kw" style="left:480px;top:845.6px">salary<svg width="22" height="18" viewBox="0 0 22 18" style="vertical-align:-2px;margin-left:15px"><path d="M3 2.2l7.3 6.6L3 15.4M13 2.2l7.3 6.6L13 15.4" fill="none" stroke="#a3a5ad" stroke-width="2.8" stroke-linecap="round" stroke-linejoin="round"/></svg></div>
<div class="a" style="left:748px;top:820.5px;width:25px;height:25px;border-radius:4px;background:#c4e3fd;color:#0a5ab4;font-size:18px;font-weight:bold;line-height:27px;text-align:center">I</div>
<div class="a" style="left:780px;top:820.5px;width:25px;height:25px;border-radius:4px;background:#fcde86;color:#a55900;font-size:18px;font-weight:bold;line-height:27px;text-align:center">C</div>
<div class="a num" style="left:790px;width:200px;text-align:right;top:820.0px;letter-spacing:-0.6px">14.8K</div>
<div class="a num" style="left:886px;width:200px;text-align:right;top:820.0px;letter-spacing:.9px">69</div>
<div class="a" style="left:1099.3px;top:823.6px;width:18.6px;height:18.6px;border-radius:50%;background:#ff8c43"></div>
<div class="a num" style="left:1053.5px;width:200px;text-align:right;top:820.0px">0.85</div>
<svg class="a" style="left:1280px;top:822.0px" width="24" height="20" viewBox="0 0 24 20"><path d="M0 0h23.6v7H20.6V4H3v12.7h7.5v3H0z" fill="#a3a5ad"/><circle cx="16.9" cy="12.9" r="3.9" fill="none" stroke="#a3a5ad" stroke-width="2.8"/><path d="M19.8 15.8l2.4 2.4" stroke="#a3a5ad" stroke-width="2.8" stroke-linecap="round"/></svg>
<div class="a" style="left:1318px;top:818.0px;width:2px;height:31px;background:#e0e1e6"></div>
<div class="a num" style="left:1332px;top:820.0px;color:#5b5d66">2</div>
<div class="a" style="left:1332px;top:846.5px;width:13px;height:0;border-top:1.5px dashed #9a9ca5"></div>
<div class="a num" style="left:1413px;top:820.0px">Last week</div>
<svg class="a" style="left:1527px;top:820.0px" width="26" height="26" viewBox="0 0 26 26"><path d="M20.41 7.21A9.4 9.4 0 1 0 19.87 19.41" fill="none" stroke="#0a67c9" stroke-width="3.1" stroke-linecap="round"/><path d="M22.6 3.2V10.2H15.6z" fill="#0a67c9" stroke="#0a67c9" stroke-width="1.6" stroke-linejoin="round"/></svg>
<div class="a" style="left:366px;top:985.0px;width:1218px;height:1.5px;background:#e4e5e9"></div>
<div class="a" style="left:397px;top:912.0px;width:25px;height:25px;border:1.5px solid #cdcfd5;border-radius:5px;background:#fff"></div>
<svg class="a" style="left:447px;top:913.0px" width="27" height="27" viewBox="0 0 27 27"><circle cx="13.5" cy="13.5" r="10.9" fill="none" stroke="#a3a5ad" stroke-width="3"/><path d="M13.5 8.7v9.6M8.7 13.5h9.6" stroke="#a3a5ad" stroke-width="2.7" stroke-linecap="round"/></svg>
<div class="a kw" style="left:480px;top:912.5px">interior design styles</div>
<div class="a kw" style="left:480px;top:940.1px"><svg width="22" height="18" viewBox="0 0 22 18" style="vertical-align:-2px;margin-left:1px"><path d="M3 2.2l7.3 6.6L3 15.4M13 2.2l7.3 6.6L13 15.4" fill="none" stroke="#a3a5ad" stroke-width="2.8" stroke-linecap="round" stroke-linejoin="round"/></svg></div>
<div class="a" style="left:748px;top:915.0px;width:25px;height:25px;border-radius:4px;background:#c4e3fd;color:#0a5ab4;font-size:18px;font-weight:bold;line-height:27px;text-align:center">I</div>
<div class="a num" style="left:790px;width:200px;text-align:right;top:914.5px;letter-spacing:0px">9.9K</div>
<div class="a num" style="left:886px;width:200px;text-align:right;top:914.5px;letter-spacing:.9px">75</div>
<div class="a" style="left:1099.3px;top:918.1px;width:18.6px;height:18.6px;border-radius:50%;background:#ff4953"></div>
<div class="a num" style="left:1053.5px;width:200px;text-align:right;top:914.5px">0.39</div>
<svg class="a" style="left:1280px;top:916.5px" width="24" height="20" viewBox="0 0 24 20"><path d="M0 0h23.6v7H20.6V4H3v12.7h7.5v3H0z" fill="#a3a5ad"/><circle cx="16.9" cy="12.9" r="3.9" fill="none" stroke="#a3a5ad" stroke-width="2.8"/><path d="M19.8 15.8l2.4 2.4" stroke="#a3a5ad" stroke-width="2.8" stroke-linecap="round"/></svg>
<div class="a" style="left:1318px;top:912.5px;width:2px;height:31px;background:#e0e1e6"></div>
<div class="a num" style="left:1332px;top:914.5px;color:#5b5d66">7</div>
<div class="a" style="left:1332px;top:941.0px;width:13px;height:0;border-top:1.5px dashed #9a9ca5"></div>
<div class="a num" style="left:1413px;top:914.5px">Last week</div>
<svg class="a" style="left:1527px;top:914.5px" width="26" height="26" viewBox="0 0 26 26"><path d="M20.41 7.21A9.4 9.4 0 1 0 19.87 19.41" fill="none" stroke="#0a67c9" stroke-width="3.1" stroke-linecap="round"/><path d="M22.6 3.2V10.2H15.6z" fill="#0a67c9" stroke="#0a67c9" stroke-width="1.6" stroke-linejoin="round"/></svg>
<div class="a" style="left:366px;top:1079.5px;width:1218px;height:1.5px;background:#e4e5e9"></div>
<div class="a" style="left:397px;top:1006.0px;width:25px;height:25px;border:1.5px solid #cdcfd5;border-radius:5px;background:#fff"></div>
<svg class="a" style="left:447px;top:1007.0px" width="27" height="27" viewBox="0 0 27 27"><circle cx="13.5" cy="13.5" r="10.9" fill="none" stroke="#a3a5ad" stroke-width="3"/><path d="M13.5 8.7v9.6M8.7 13.5h9.6" stroke="#a3a5ad" stroke-width="2.7" stroke-linecap="round"/></svg>
<div class="a kw" style="left:480px;top:1006.5px">interior design salary</div>
<div class="a kw" style="left:480px;top:1034.1px"><svg width="22" height="18" viewBox="0 0 22 18" style="vertical-align:-2px;margin-left:1px"><path d="M3 2.2l7.3 6.6L3 15.4M13 2.2l7.3 6.6L13 15.4" fill="none" stroke="#a3a5ad" stroke-width="2.8" stroke-linecap="round" stroke-linejoin="round"/></svg></div>
<div class="a" style="left:748px;top:1009.0px;width:25px;height:25px;border-radius:4px;background:#c4e3fd;color:#0a5ab4;font-size:18px;font-weight:bold;line-height:27px;text-align:center">I</div>
<div class="a num" style="left:790px;width:200px;text-align:right;top:1008.5px;letter-spacing:-0.9px">8.1K</div>
<div class="a num" style="left:886px;width:200px;text-align:right;top:1008.5px;letter-spacing:.9px">65</div>
<div class="a" style="left:1099.3px;top:1012.1px;width:18.6px;height:18.6px;border-radius:50%;background:#ff8c43"></div>
<div class="a num" style="left:1053.5px;width:200px;text-align:right;top:1008.5px">0.84</div>
<svg class="a" style="left:1280px;top:1010.5px" width="24" height="20" viewBox="0 0 24 20"><path d="M0 0h23.6v7H20.6V4H3v12.7h7.5v3H0z" fill="#a3a5ad"/><circle cx="16.9" cy="12.9" r="3.9" fill="none" stroke="#a3a5ad" stroke-width="2.8"/><path d="M19.8 15.8l2.4 2.4" stroke="#a3a5ad" stroke-width="2.8" stroke-linecap="round"/></svg>
<div class="a" style="left:1318px;top:1006.5px;width:2px;height:31px;background:#e0e1e6"></div>
<div class="a num" style="left:1332px;top:1008.5px;color:#5b5d66">4</div>
<div class="a" style="left:1332px;top:1035.0px;width:13px;height:0;border-top:1.5px dashed #9a9ca5"></div>
<div class="a num" style="left:1413px;top:1008.5px">Last week</div>
<svg class="a" style="left:1527px;top:1008.5px" width="26" height="26" viewBox="0 0 26 26"><path d="M20.41 7.21A9.4 9.4 0 1 0 19.87 19.41" fill="none" stroke="#0a67c9" stroke-width="3.1" stroke-linecap="round"/><path d="M22.6 3.2V10.2H15.6z" fill="#0a67c9" stroke="#0a67c9" stroke-width="1.6" stroke-linejoin="round"/></svg>
<div class="a" style="left:366px;top:1174.0px;width:1218px;height:1.5px;background:#e4e5e9"></div>
<div class="a" style="left:397px;top:1100.5px;width:25px;height:25px;border:1.5px solid #cdcfd5;border-radius:5px;background:#fff"></div>
<svg class="a" style="left:447px;top:1101.5px" width="27" height="27" viewBox="0 0 27 27"><circle cx="13.5" cy="13.5" r="10.9" fill="none" stroke="#a3a5ad" stroke-width="3"/><path d="M13.5 8.7v9.6M8.7 13.5h9.6" stroke="#a3a5ad" stroke-width="2.7" stroke-linecap="round"/></svg>
<div class="a kw" style="left:480px;top:1101.0px">interior designers<svg width="22" height="18" viewBox="0 0 22 18" style="vertical-align:-2px;margin-left:15px"><path d="M3 2.2l7.3 6.6L3 15.4M13 2.2l7.3 6.6L13 15.4" fill="none" stroke="#a3a5ad" stroke-width="2.8" stroke-linecap="round" stroke-linejoin="round"/></svg></div>
<div class="a" style="left:748px;top:1103.5px;width:25px;height:25px;border-radius:4px;background:#fcde86;color:#a55900;font-size:18px;font-weight:bold;line-height:27px;text-align:center">C</div>
<div class="a num" style="left:790px;width:200px;text-align:right;top:1103.0px;letter-spacing:-0.9px">8.1K</div>
<div class="a num" style="left:886px;width:200px;text-align:right;top:1103.0px;letter-spacing:.9px">78</div>
<div class="a" style="left:1099.3px;top:1106.6px;width:18.6px;height:18.6px;border-radius:50%;background:#ff4953"></div>
<div class="a num" style="left:1053.5px;width:200px;text-align:right;top:1103.0px">2.77</div>
<svg class="a" style="left:1280px;top:1105.0px" width="24" height="20" viewBox="0 0 24 20"><path d="M0 0h23.6v7H20.6V4H3v12.7h7.5v3H0z" fill="#a3a5ad"/><circle cx="16.9" cy="12.9" r="3.9" fill="none" stroke="#a3a5ad" stroke-width="2.8"/><path d="M19.8 15.8l2.4 2.4" stroke="#a3a5ad" stroke-width="2.8" stroke-linecap="round"/></svg>
<div class="a" style="left:1318px;top:1101.0px;width:2px;height:31px;background:#e0e1e6"></div>
<div class="a num" style="left:1332px;top:1103.0px;color:#5b5d66">9</div>
<div class="a" style="left:1332px;top:1129.5px;width:13px;height:0;border-top:1.5px dashed #9a9ca5"></div>
<div class="a num" style="left:1413px;top:1103.0px">Last week</div>
<svg class="a" style="left:1527px;top:1103.0px" width="26" height="26" viewBox="0 0 26 26"><path d="M20.41 7.21A9.4 9.4 0 1 0 19.87 19.41" fill="none" stroke="#0a67c9" stroke-width="3.1" stroke-linecap="round"/><path d="M22.6 3.2V10.2H15.6z" fill="#0a67c9" stroke="#0a67c9" stroke-width="1.6" stroke-linejoin="round"/></svg>
<div class="a" style="left:432px;top:471px;width:303px;height:611.5px;border:6.5px solid #b880fb;border-radius:12px"></div>
<div class="a" style="left:0;top:1080px;width:1600px;height:74px;background:linear-gradient(to bottom,rgba(255,255,255,0) 0%,rgba(255,255,255,1) 80%)"></div>
</body></html>
